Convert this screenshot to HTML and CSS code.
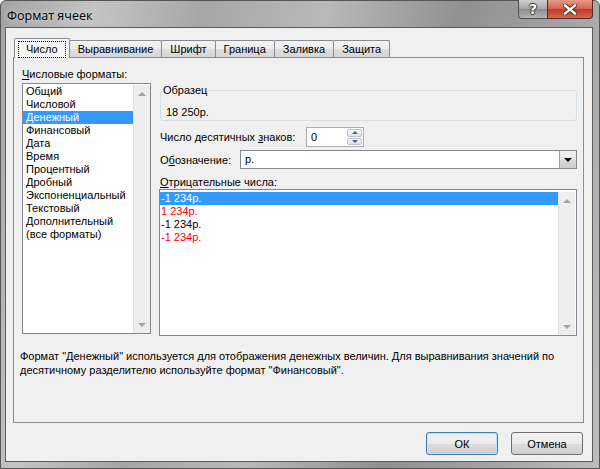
FILE: index.html
```html
<!DOCTYPE html>
<html lang="ru">
<head>
  <meta charset="UTF-8">
  <meta name="viewport" content="width=device-width, initial-scale=1.0">
  <title>Формат ячеек</title>
<link rel="stylesheet" href="styles.css">
</head>
<body>
  <div class="window">
    <div class="titlebar">
      <span class="title">Формат ячеек</span>
      <div class="caption-btns">
        <span class="cap-btn help">?</span>
        <span class="cap-btn close">
          <svg width="14" height="11" viewBox="0 0 14 11">
            <path d="M2 1.5 L12 9.5 M12 1.5 L2 9.5" stroke="#4a1e16" stroke-width="4.2" stroke-linecap="square"/>
            <path d="M2 1.5 L12 9.5 M12 1.5 L2 9.5" stroke="#fff" stroke-width="2.4" stroke-linecap="square"/>
          </svg>
        </span>
      </div>
    </div>

    <div class="client">
      <div class="tabs">
        <span class="tab active"><span class="focus">Число</span></span>
        <span class="tab">Выравнивание</span>
        <span class="tab">Шрифт</span>
        <span class="tab">Граница</span>
        <span class="tab">Заливка</span>
        <span class="tab">Защита</span>
      </div>

      <div class="panel">
        <div class="cols">
          <div class="col-left">
            <div class="label"><u>Ч</u>исловые форматы:</div>
            <div class="listbox left-list">
              <ul class="items">
                <li>Общий</li>
                <li>Числовой</li>
                <li class="sel">Денежный</li>
                <li>Финансовый</li>
                <li>Дата</li>
                <li>Время</li>
                <li>Процентный</li>
                <li>Дробный</li>
                <li>Экспоненциальный</li>
                <li>Текстовый</li>
                <li>Дополнительный</li>
                <li>(все форматы)</li>
              </ul>
              <div class="vscroll"><span class="arr up"></span><span class="arr down"></span></div>
            </div>
          </div>

          <div class="col-right">
            <fieldset class="sample">
              <legend>Образец</legend>
              <div class="sample-val">18 250р.</div>
            </fieldset>

            <div class="field-row">
              <label class="lbl-dec">Число десятичных <u>з</u>наков:</label>
              <div class="spin">
                <span class="spin-val">0</span>
                <div class="spin-btns">
                  <span class="sb"><span class="tri up"></span></span>
                  <span class="sb"><span class="tri down"></span></span>
                </div>
              </div>
            </div>

            <div class="field-row combo-row">
              <label class="lbl-sym">О<u>б</u>означение:</label>
              <div class="combo">
                <span class="combo-val">р.</span>
                <span class="combo-btn"><span class="tri-black"></span></span>
              </div>
            </div>

            <div class="label neg-label"><u>О</u>трицательные числа:</div>
            <div class="listbox neg-list">
              <ul class="items">
                <li class="sel">-1 234р.</li>
                <li class="red">1 234р.</li>
                <li>-1 234р.</li>
                <li class="red">-1 234р.</li>
              </ul>
              <div class="vscroll"><span class="arr up"></span><span class="arr down"></span></div>
            </div>
          </div>
        </div>

        <p class="desc">Формат "Денежный" используется для отображения денежных величин. Для выравнивания значений по десятичному разделителю используйте формат "Финансовый".</p>
      </div>

      <div class="buttons">
        <button class="btn default">ОК</button>
        <button class="btn">Отмена</button>
      </div>
    </div>
  </div>
</body>
</html>
```

FILE: styles.css
```css
html, body {
  margin: 0;
  padding: 0;
  background: #ffffff;
}
body {
  font-family: "Liberation Sans", Arial, sans-serif;
  font-size: 11px;
  color: #000;
}
ul {
  margin: 0;
  padding: 0;
  list-style: none;
}

/* окно */
.window {
  width: 600px;
  height: 469px;
  box-sizing: border-box;
  display: flex;
  flex-direction: column;
  border: 1px solid #555;
  border-radius: 6px 6px 0 0;
  background: linear-gradient(100deg, #a3a3a3 0%, #c4c4c4 14%, #a6a6a6 30%, #b9b9b9 48%, #909090 68%, #a4a4a4 84%, #bdbdbd 100%);
}
.titlebar {
  height: 26px;
  flex-shrink: 0;
  display: flex;
  justify-content: space-between;
  align-items: flex-start;
}
.title {
  padding: 6px 0 0 6px;
  font-family: "Open Sans", sans-serif;
  font-size: 12.5px;
  text-shadow: 0 0 6px rgba(255, 255, 255, 0.8);
}
.caption-btns {
  display: flex;
  margin-right: 6px;
  margin-top: -1px;
}
.cap-btn {
  height: 19px;
  display: flex;
  align-items: center;
  justify-content: center;
  border: 1px solid #4d4d4d;
  border-top: none;
  box-sizing: border-box;
}
.help {
  width: 29px;
  border-right: none;
  border-radius: 0 0 0 4px;
  background: linear-gradient(#cfcfcf, #a5a5a5 50%, #8d8d8d 51%, #b3b3b3);
  color: #fff;
  font: bold 14px "DejaVu Sans", sans-serif;
  text-shadow: 1px 0 #333, -1px 0 #333, 0 1px #333, 0 -1px #333;
}
.close {
  width: 46px;
  border-radius: 0 0 4px 0;
  border-color: #5a2a22;
  background: linear-gradient(#e59a8b, #d4614c 50%, #c1381f 51%, #d06a50);
}

/* клиентская область */
.client {
  flex: 1;
  margin: 0 6px 6px 4px;
  border: 1px solid #5b5b5b;
  background: #f0f0f0;
  padding: 12px 8px 6px 7px;
  display: flex;
  flex-direction: column;
}

/* вкладки */
.tabs {
  display: flex;
  align-items: flex-end;
  height: 17px;
  flex-shrink: 0;
  padding-left: 1px;
}
.tab {
  height: 17px;
  box-sizing: border-box;
  padding: 0 8px;
  line-height: 16px;
  border: 1px solid #898c95;
  border-bottom: none;
  border-radius: 2px 2px 0 0;
  margin-right: -1px;
  background: linear-gradient(#f4f4f4, #ebebeb 50%, #dedede 51%, #d6d6d6);
}
.tab.active {
  position: relative;
  z-index: 1;
  height: 20px;
  margin: 0 -1px -1px 0;
  padding: 2px 3px 0;
  background: #f7f7f7;
}
.focus {
  display: inline-block;
  padding: 0 7px;
  line-height: 15px;
  border: 1px dotted #000;
}

.panel {
  height: 366px;
  flex-shrink: 0;
  box-sizing: border-box;
  border: 1px solid #898c95;
  padding: 9px 6px 0 8px;
}
.cols {
  display: flex;
  gap: 8px;
}
.col-left {
  width: 130px;
}
.col-right {
  width: 418px;
}
.label {
  line-height: 15px;
  margin-bottom: 1px;
}

/* списки */
.listbox {
  display: flex;
  box-sizing: border-box;
  border: 1px solid #828790;
  background: #fff;
}
.left-list {
  height: 251px;
  padding-top: 1px;
}
.neg-list {
  height: 147px;
  padding: 2px 1px 0 0;
}
.listbox .items {
  flex: 1;
}
.listbox li {
  height: 13px;
  line-height: 13px;
  padding-left: 3px;
  white-space: nowrap;
}
.neg-list li {
  padding-left: 1px;
}
.listbox li.sel {
  background: #3399ff;
  color: #fff;
}
.listbox li.red {
  color: #ff0000;
}
.vscroll {
  width: 17px;
  box-sizing: border-box;
  background: #eeeeee;
  border-left: 1px solid #e2e2e2;
  display: flex;
  flex-direction: column;
  justify-content: space-between;
  align-items: center;
  padding: 7px 0 6px;
}
.arr {
  width: 0;
  height: 0;
  border-left: 4px solid transparent;
  border-right: 4px solid transparent;
}
.arr.up {
  border-bottom: 4px solid #a3a3a3;
}
.arr.down {
  border-top: 4px solid #a3a3a3;
}

/* образец */
.sample {
  margin: 16px 0 0 1px;
  padding: 8px 5px 1px 1px;
  border: 1px solid #d5dfe5;
  border-radius: 3px;
}
.sample legend {
  padding: 0 1px;
  line-height: 14px;
}
.sample-val {
  line-height: 14px;
  padding-left: 4px;
}

/* поля */
.field-row {
  display: flex;
  align-items: center;
  height: 20px;
  margin-top: 6px;
  padding-left: 1px;
}
.combo-row {
  height: 19px;
  margin-top: 3px;
}
.lbl-dec {
  width: 146px;
}
.lbl-sym {
  width: 80px;
}
.spin {
  width: 58px;
  height: 20px;
  box-sizing: border-box;
  border: 1px solid #abadb3;
  background: #fff;
  display: flex;
  justify-content: space-between;
}
.spin-val {
  padding-left: 4px;
  line-height: 18px;
}
.spin-btns {
  width: 15px;
  display: flex;
  flex-direction: column;
  gap: 1px;
  padding: 1px 1px 1px 0;
}
.sb {
  flex: 1;
  display: flex;
  align-items: center;
  justify-content: center;
  border: 1px solid #bcc3cc;
  border-radius: 2px;
  background: linear-gradient(#f6f8fa, #dde3ea);
}
.tri {
  width: 0;
  height: 0;
  border-left: 3px solid transparent;
  border-right: 3px solid transparent;
}
.tri.up {
  border-bottom: 3px solid #4d6185;
}
.tri.down {
  border-top: 3px solid #4d6185;
}
.combo {
  width: 337px;
  height: 19px;
  box-sizing: border-box;
  border: 1px solid #828790;
  background: #fff;
  display: flex;
  justify-content: space-between;
}
.combo-val {
  padding-left: 4px;
  line-height: 17px;
}
.combo-btn {
  width: 17px;
  box-sizing: border-box;
  border-left: 1px solid #a0a0a0;
  background: linear-gradient(#f4f4f4, #e6e6e6 50%, #d9d9d9 51%, #cfcfcf);
  display: flex;
  align-items: center;
  justify-content: center;
}
.tri-black {
  width: 0;
  height: 0;
  border-left: 4px solid transparent;
  border-right: 4px solid transparent;
  border-top: 4px solid #000;
}
.neg-label {
  margin-top: 6px;
  line-height: 14px;
  margin-bottom: 0;
  padding-left: 1px;
}

.desc {
  margin: 13px 0 0 -2px;
  line-height: 14px;
}

/* кнопки */
.buttons {
  display: flex;
  justify-content: flex-end;
  gap: 13px;
  margin-top: 9px;
  margin-right: 1px;
}
.btn {
  width: 72px;
  height: 23px;
  font: inherit;
  border: 1px solid #707070;
  border-radius: 3px;
  background: linear-gradient(#f2f2f2, #ebebeb 50%, #dddddd 51%, #cfcfcf);
  padding: 0;
}
.btn.default {
  border-color: #3c7fb1;
  box-shadow: inset 0 0 0 1px #b7e5f9;
}
```
